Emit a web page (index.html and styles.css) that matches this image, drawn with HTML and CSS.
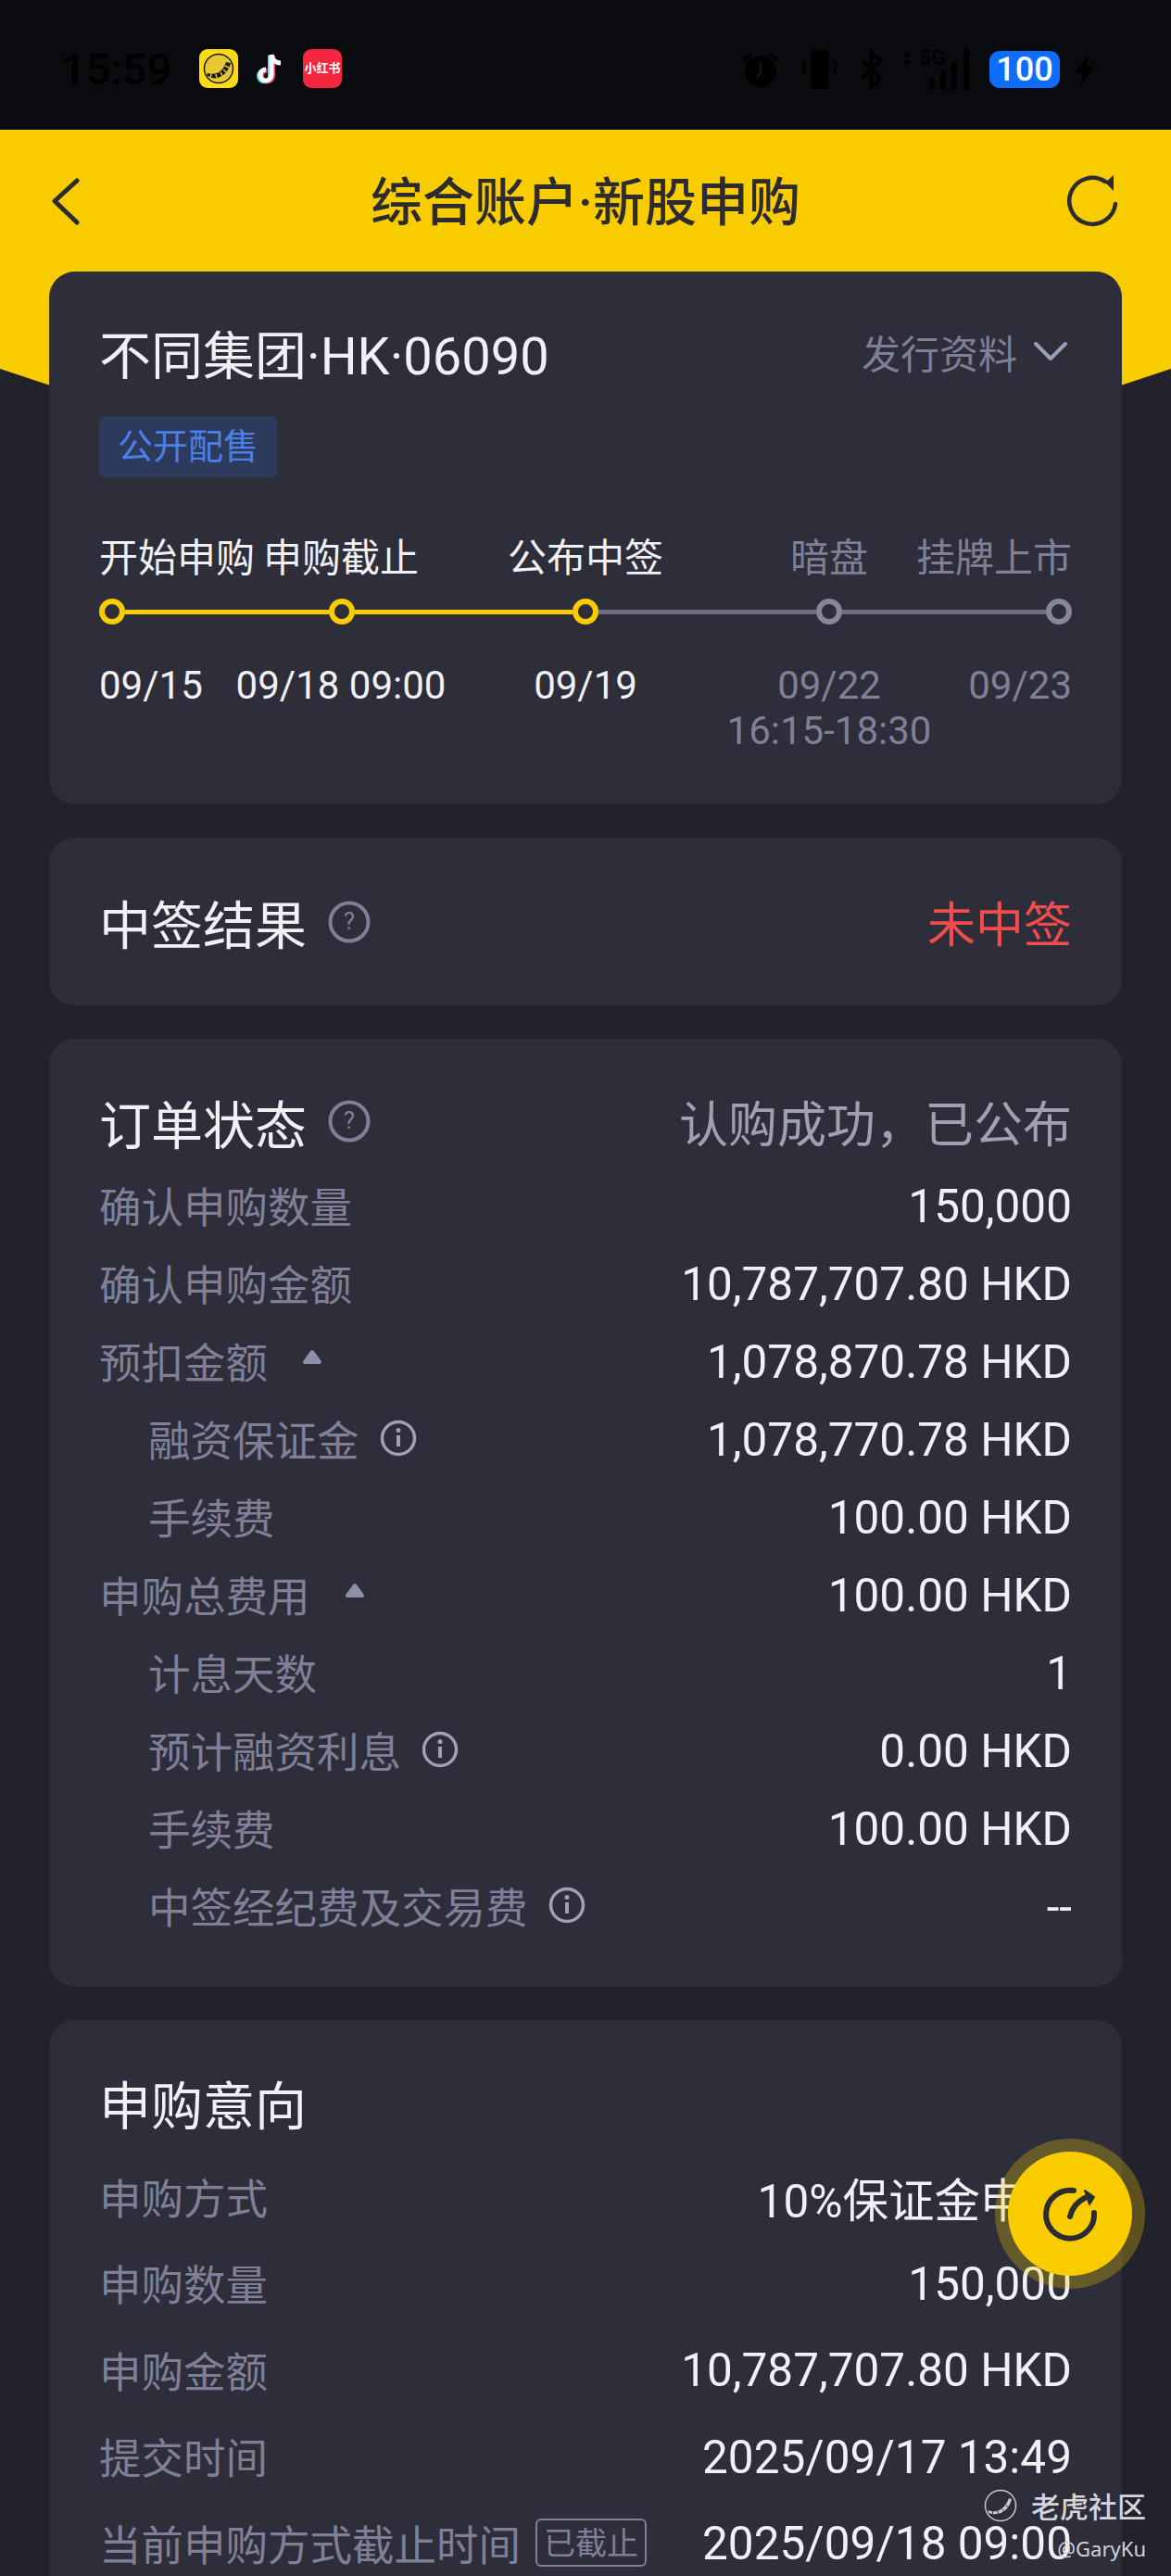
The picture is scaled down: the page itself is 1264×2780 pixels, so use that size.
FILE: index.html
```html
<!DOCTYPE html>
<html>
<head>
<title>综合账户·新股申购</title>
<link rel="stylesheet" href="styles.css">
</head>
<body>

<div class="page">
  <div class="banner"></div>

  <div class="statusbar">
    <span class="clock">15:59</span>
    <div class="notif-icons">
      <svg class="app-icon" viewBox="0 0 42 42"><rect width="42" height="42" rx="9" fill="#fadb14"/><circle cx="21" cy="21" r="15.500" fill="#e8c832" stroke="#1a1a10" stroke-width="1.500"/><path d="M8 28c4 3 8 4 12 3 7-2 12-8 14-16l-5-1c-2 6-5 10-10 12-3 1-7 1-10 0z" fill="#1a1a10"/><path d="M13 27l-1 4M18 27l1 4M23 25l2 4M26 22l3 3M28 18l4 2" stroke="#e8c832" stroke-width="1.500"/></svg>
      <svg class="app-icon" viewBox="0 0 42 42"><path d="M22 6v22a6 6 0 1 1-6-6" fill="none" stroke="#35e0e6" stroke-width="5" transform="translate(-1.500 1)"/><path d="M22 6v22a6 6 0 1 1-6-6" fill="none" stroke="#f0406a" stroke-width="5" transform="translate(1.500 1)"/><path d="M22 6v22a6 6 0 1 1-6-6M22 6c1 6 5 9 10 9" fill="none" stroke="#fff" stroke-width="5"/></svg>
      <div class="xhs">小红书</div>
    </div>
    <div class="sys-icons">
      <svg class="sys-alarm" viewBox="0 0 44 44"><circle cx="22" cy="24" r="17" fill="#000"/><path d="M4 12l8-7M40 12l-8-7" stroke="#000" stroke-width="4"/><path d="M22 14v11l-4 6" fill="none" stroke="#15161a" stroke-width="2"/></svg>
      <svg class="sys-phone" viewBox="0 0 44 44"><rect x="12" y="0" width="20" height="44" rx="3" fill="#000"/><path d="M6 12l-3 5 3 5-3 5M38 12l3 5-3 5 3 5" fill="none" stroke="#000" stroke-width="2"/></svg>
      <svg class="sys-bt" viewBox="8 0 28 44"><path d="M12 12l20 20-10 10V2l10 10-20 20" fill="none" stroke="#000" stroke-width="4"/></svg>
      <div class="signal">
        <svg class="updown" viewBox="0 0 8 18"><path d="M4 1l4 6H0zM4 17l4-6H0z" fill="#000"/></svg>
        <span class="five-g">5G</span>
        <svg class="bars" viewBox="0 0 45 44"><path d="M4 44V32M16 44V24M28 44V14M41 44V0" stroke="#000" stroke-width="6"/></svg>
      </div>
      <div class="battery">100</div>
      <svg class="bolt" viewBox="0 0 28 44"><path d="M20 2L3 26h9l-4 17L25 18h-9z" fill="#000"/></svg>
    </div>
  </div>

  <div class="navbar">
    <svg class="nav-back" viewBox="0 0 36 54"><path d="M33 5L9 27l24 23" fill="none" stroke="#2b2b30" stroke-width="5" stroke-linecap="round" stroke-linejoin="round"/></svg>
    <h1 class="nav-title">综合账户<span class="dot">·</span>新股申购</h1>
    <svg class="nav-refresh" viewBox="0 0 60 60"><path d="M43 9A25 25 0 1 0 54 33" fill="none" stroke="#2b2b30" stroke-width="4.500" stroke-linecap="round"/><path d="M52 2v17l-9-9z" fill="#2b2b30"/></svg>
  </div>

  <div class="cards">
    <section class="card card-ipo">
      <div class="ipo-head">
        <div class="ipo-name">不同集团·HK·06090</div>
        <div class="ipo-more">发行资料
          <svg class="chevron" viewBox="0 0 38 22"><path d="M3 3l16 16L35 3" fill="none" stroke="#9c9db8" stroke-width="4" stroke-linecap="round" stroke-linejoin="round"/></svg>
        </div>
      </div>
      <span class="tag">公开配售</span>

      <div class="steps steps-label">
        <div class="step-first">开始申购</div>
        <div class="step-mid">申购截止</div>
        <div class="step-mid">公布中签</div>
        <div class="step-mid off">暗盘</div>
        <div class="step-last off">挂牌上市</div>
      </div>
      <div class="track">
        <span class="node"></span><span class="seg seg-s"></span>
        <span class="node"></span><span class="seg seg-l"></span>
        <span class="node"></span><span class="seg seg-l off"></span>
        <span class="node off"></span><span class="seg seg-s off"></span>
        <span class="node off"></span>
      </div>
      <div class="steps steps-date">
        <div class="step-first">09/15</div>
        <div class="step-mid">09/18 09:00</div>
        <div class="step-mid">09/19</div>
        <div class="step-mid off">09/22<br>16:15-18:30</div>
        <div class="step-last off">09/23</div>
      </div>
    </section>

    <section class="card card-result">
      <div class="card-title">中签结果
        <svg class="help" viewBox="0 0 46 46"><circle cx="23" cy="23" r="20.500" fill="none" stroke="#7f8097" stroke-width="4"/><text x="23" y="31" text-anchor="middle" class="help-mark">?</text></svg>
      </div>
      <div class="result-lose">未中签</div>
    </section>

    <section class="card card-order">
      <div class="order-head">
        <div class="card-title">订单状态
          <svg class="help" viewBox="0 0 46 46"><circle cx="23" cy="23" r="20.500" fill="none" stroke="#7f8097" stroke-width="4"/><text x="23" y="31" text-anchor="middle" class="help-mark">?</text></svg>
        </div>
        <div class="order-status">认购成功，已公布</div>
      </div>
      <div class="row"><span class="label">确认申购数量</span><span class="value">150,000</span></div>
      <div class="row"><span class="label">确认申购金额</span><span class="value">10,787,707.80 HKD</span></div>
      <div class="row"><span class="label">预扣金额<svg class="caret" viewBox="0 0 22 17"><path d="M11 3l8 11H3z" fill="#8e8fa8" stroke="#8e8fa8" stroke-width="4" stroke-linejoin="round"/></svg></span><span class="value">1,078,870.78 HKD</span></div>
      <div class="row sub"><span class="label">融资保证金
        <svg class="info" viewBox="0 0 40 40"><circle cx="20" cy="20" r="17.500" fill="none" stroke="#a0a1b2" stroke-width="3.500"/><path d="M20 17v12" stroke="#a0a1b2" stroke-width="4"/><circle cx="20" cy="11.500" r="2.500" fill="#a0a1b2"/></svg>
      </span><span class="value">1,078,770.78 HKD</span></div>
      <div class="row sub"><span class="label">手续费</span><span class="value">100.00 HKD</span></div>
      <div class="row"><span class="label">申购总费用<svg class="caret" viewBox="0 0 22 17"><path d="M11 3l8 11H3z" fill="#8e8fa8" stroke="#8e8fa8" stroke-width="4" stroke-linejoin="round"/></svg></span><span class="value">100.00 HKD</span></div>
      <div class="row sub"><span class="label">计息天数</span><span class="value">1</span></div>
      <div class="row sub"><span class="label">预计融资利息
        <svg class="info" viewBox="0 0 40 40"><circle cx="20" cy="20" r="17.500" fill="none" stroke="#a0a1b2" stroke-width="3.500"/><path d="M20 17v12" stroke="#a0a1b2" stroke-width="4"/><circle cx="20" cy="11.500" r="2.500" fill="#a0a1b2"/></svg>
      </span><span class="value">0.00 HKD</span></div>
      <div class="row sub"><span class="label">手续费</span><span class="value">100.00 HKD</span></div>
      <div class="row sub"><span class="label">中签经纪费及交易费
        <svg class="info" viewBox="0 0 40 40"><circle cx="20" cy="20" r="17.500" fill="none" stroke="#a0a1b2" stroke-width="3.500"/><path d="M20 17v12" stroke="#a0a1b2" stroke-width="4"/><circle cx="20" cy="11.500" r="2.500" fill="#a0a1b2"/></svg>
      </span><span class="value">--</span></div>
    </section>

    <section class="card card-intent">
      <div class="card-title">申购意向</div>
      <div class="row"><span class="label">申购方式</span><span class="value">10%保证金申购</span></div>
      <div class="row"><span class="label">申购数量</span><span class="value">150,000</span></div>
      <div class="row"><span class="label">申购金额</span><span class="value">10,787,707.80 HKD</span></div>
      <div class="row"><span class="label">提交时间</span><span class="value">2025/09/17 13:49</span></div>
      <div class="row"><span class="label">当前申购方式截止时间<span class="closed">已截止</span></span><span class="value">2025/09/18 09:00</span></div>
    </section>
  </div>

  <button class="fab">
    <svg viewBox="0 0 60 60"><path d="M34 5A26 26 0 1 0 56 29" fill="none" stroke="#2b2b30" stroke-width="6" stroke-linecap="round"/><path d="M30 33c2-9 8-16 16-20" fill="none" stroke="#2b2b30" stroke-width="6" stroke-linecap="round"/><path d="M46 5l10 7-5 8z" fill="#2b2b30" stroke="#2b2b30" stroke-width="2" stroke-linejoin="round"/></svg>
  </button>

  <div class="watermark">
    <div class="wm-top">
      <svg class="wm-logo" viewBox="0 0 36 36"><circle cx="18" cy="18" r="16.500" fill="none" stroke="#c8c8d0" stroke-width="1.500"/><path d="M5 23c8 4 18-1 22-13l3 1c-3 13-14 19-25 15z" fill="#c8c8d0"/><path d="M10 24l-1 3M15 24l0 3M20 22l2 3M24 18l3 2" stroke="#2d2e3a" stroke-width="1"/></svg>
      <span>老虎社区</span>
    </div>
    <div class="wm-user">@GaryKu</div>
  </div>
</div>

</body>
</html>
```
FILE: styles.css
```css
* {
  box-sizing: border-box;
}
html, body {
  margin: 0;
  padding: 0;
}
body {
  font-family: Roboto, "Noto Sans CJK SC", sans-serif;
  background-color: #21222b;
}
.page {
  position: relative;
  width: 1264px;
  height: 2780px;
  overflow: hidden;
  background-color: #21222b;
}
.banner {
  position: absolute;
  top: 140px;
  left: 0;
  width: 1264px;
  height: 470px;
  background-color: #f9cc00;
  clip-path: polygon(0 0, 100% 0, 100% 258px, 50% 467px, 0 258px);
}

/* status bar */
.statusbar {
  position: relative;
  height: 140px;
  background-color: #0a0b0f;
  display: flex;
  align-items: flex-start;
  padding: 53px 80px 0 66px;
}
.clock {
  font-size: 47px;
  line-height: 44px;
  font-weight: 500;
  color: #000;
  width: 149px;
}
.notif-icons {
  display: flex;
  gap: 14px;
}
.app-icon {
  width: 42px;
  height: 42px;
}
.xhs {
  width: 42px;
  height: 42px;
  border-radius: 9px;
  background-color: #f5263f;
  color: #fff;
  font-size: 13px;
  font-weight: 700;
  line-height: 42px;
  text-align: center;
  white-space: nowrap;
}
.sys-icons {
  margin-left: auto;
  display: flex;
  align-items: flex-start;
  gap: 21px;
}
.sys-alarm {
  width: 44px;
  height: 44px;
}
.sys-phone {
  width: 42px;
  height: 44px;
}
.sys-bt {
  width: 27px;
  height: 44px;
}
.signal {
  position: relative;
  width: 72px;
  height: 44px;
}
.updown {
  position: absolute;
  top: 1px;
  left: 0;
  width: 8px;
  height: 18px;
}
.five-g {
  position: absolute;
  top: -3px;
  left: 18px;
  font-size: 22px;
  font-weight: 700;
  color: #000;
}
.bars {
  position: absolute;
  right: 0;
  bottom: 0;
  width: 45px;
  height: 44px;
}
.battery {
  width: 76px;
  height: 40px;
  margin-top: 2px;
  border-radius: 11px;
  background-color: #0d6efd;
  color: #fff;
  font-size: 36px;
  font-weight: 500;
  line-height: 40px;
  text-align: center;
}
.bolt {
  width: 26px;
  height: 44px;
  margin-left: -7px;
}

/* nav */
.navbar {
  position: relative;
  height: 153px;
  display: flex;
  align-items: center;
  justify-content: center;
  padding-bottom: 6px;
}
.nav-back {
  position: absolute;
  left: 50px;
  top: 50px;
  width: 36px;
  height: 54px;
}
.nav-refresh {
  position: absolute;
  left: 1150px;
  top: 47px;
  width: 60px;
  height: 60px;
}
.nav-title {
  margin: 0;
  font-size: 56px;
  font-weight: 500;
  color: #2b2b30;
  white-space: nowrap;
}

/* cards */
.cards {
  position: relative;
  display: flex;
  flex-direction: column;
  gap: 36px;
  padding: 0 53px;
}
.card {
  background-color: #2d2e3a;
  border-radius: 28px;
  padding: 0 54px;
}
.card-ipo {
  height: 575px;
  padding-top: 55px;
}
.ipo-head {
  display: flex;
  align-items: center;
  justify-content: space-between;
  height: 62px;
}
.ipo-name {
  font-size: 56px;
  color: #f0f0f5;
  white-space: nowrap;
}
.ipo-more {
  display: flex;
  align-items: center;
  gap: 17px;
  font-size: 42px;
  color: #7f8097;
}
.chevron {
  width: 38px;
  height: 22px;
  margin-right: 4px;
}
.tag {
  display: inline-block;
  margin-top: 39px;
  padding: 0 20px;
  height: 66px;
  line-height: 66px;
  border-radius: 6px;
  background-color: #2c3a5c;
  color: #4d7fe8;
  font-size: 38px;
}
.steps {
  display: grid;
  grid-template-columns: 137px 248px 280px 246px 139px;
  font-size: 42px;
  color: #f0f0f5;
  white-space: nowrap;
}
.steps-label {
  margin-top: 59px;
  line-height: 58px;
}
.steps-date {
  margin-top: 41px;
  line-height: 49px;
}
.step-first {
  text-align: left;
}
.step-mid {
  text-align: center;
}
.step-last {
  display: flex;
  justify-content: flex-end;
}
.steps .off {
  color: #7f8097;
}
.track {
  display: flex;
  align-items: center;
  margin-top: 14px;
}
.node {
  flex: none;
  width: 28px;
  height: 28px;
  border-radius: 50%;
  border: 6px solid #f9cc00;
}
.node.off {
  border-color: #858699;
}
.seg {
  flex: 1 1 auto;
  height: 5px;
  background-color: #f9cc00;
}
.seg.off {
  background-color: #6d6e80;
}
.seg-s {
  width: 220px;
}
.seg-l {
  width: 236px;
}

.card-title {
  display: flex;
  align-items: center;
  gap: 23px;
  font-size: 56px;
  color: #f0f0f5;
}
.help {
  width: 46px;
  height: 46px;
}
.help-mark {
  font-family: Roboto, sans-serif;
  font-size: 26px;
  fill: #7f8097;
}
.card-result {
  height: 181px;
  display: flex;
  align-items: center;
  justify-content: space-between;
}
.result-lose {
  font-size: 52px;
  color: #f24c4c;
}

.card-order {
  height: 1023px;
  padding-top: 50px;
}
.order-head {
  display: flex;
  align-items: center;
  justify-content: space-between;
  height: 78px;
}
.order-status {
  font-size: 53px;
  color: #a0a1ae;
}
.row {
  display: flex;
  align-items: center;
  justify-content: space-between;
  height: 84px;
  white-space: nowrap;
}
.order-head + .row {
  margin-top: 9px;
}
.label {
  display: flex;
  align-items: center;
  font-size: 45.500px;
  color: #7f8097;
}
.value {
  padding-top: 3px;
  font-size: 49.500px;
  color: #f0f0f5;
}
.sub .label {
  padding-left: 53px;
}
.caret {
  width: 22px;
  height: 17px;
  margin-left: 37px;
  margin-bottom: 8px;
}
.info {
  width: 40px;
  height: 40px;
  margin-left: 22px;
}

.card-intent {
  height: 700px;
  padding-top: 52px;
}
.card-intent .card-title {
  height: 72px;
  margin-bottom: 19px;
}
.card-intent .row {
  height: 93.500px;
}
.closed {
  margin-left: 16px;
  padding: 0 7px;
  height: 52px;
  line-height: 50px;
  border: 2px solid #7f8097;
  border-radius: 6px;
  font-size: 34px;
}

/* floating button */
.fab {
  position: absolute;
  left: 1088px;
  top: 2322px;
  width: 134px;
  height: 134px;
  border: none;
  padding: 0;
  border-radius: 50%;
  background-color: #f9cc00;
  box-shadow: 0 0 0 14px rgba(249, 204, 0, 0.28);
  display: flex;
  align-items: center;
  justify-content: center;
}
.fab svg {
  width: 60px;
  height: 60px;
}

/* watermark */
.watermark {
  position: absolute;
  right: 27px;
  top: 2681px;
  display: flex;
  flex-direction: column;
  align-items: flex-end;
}
.wm-top {
  display: flex;
  align-items: center;
  gap: 15px;
  font-size: 31px;
  font-weight: 500;
  color: #d4d4da;
}
.wm-logo {
  width: 36px;
  height: 36px;
}
.wm-user {
  font-family: "Noto Sans", sans-serif;
  font-size: 22px;
  color: #d4d4da;
  margin-top: 9px;
}
```
